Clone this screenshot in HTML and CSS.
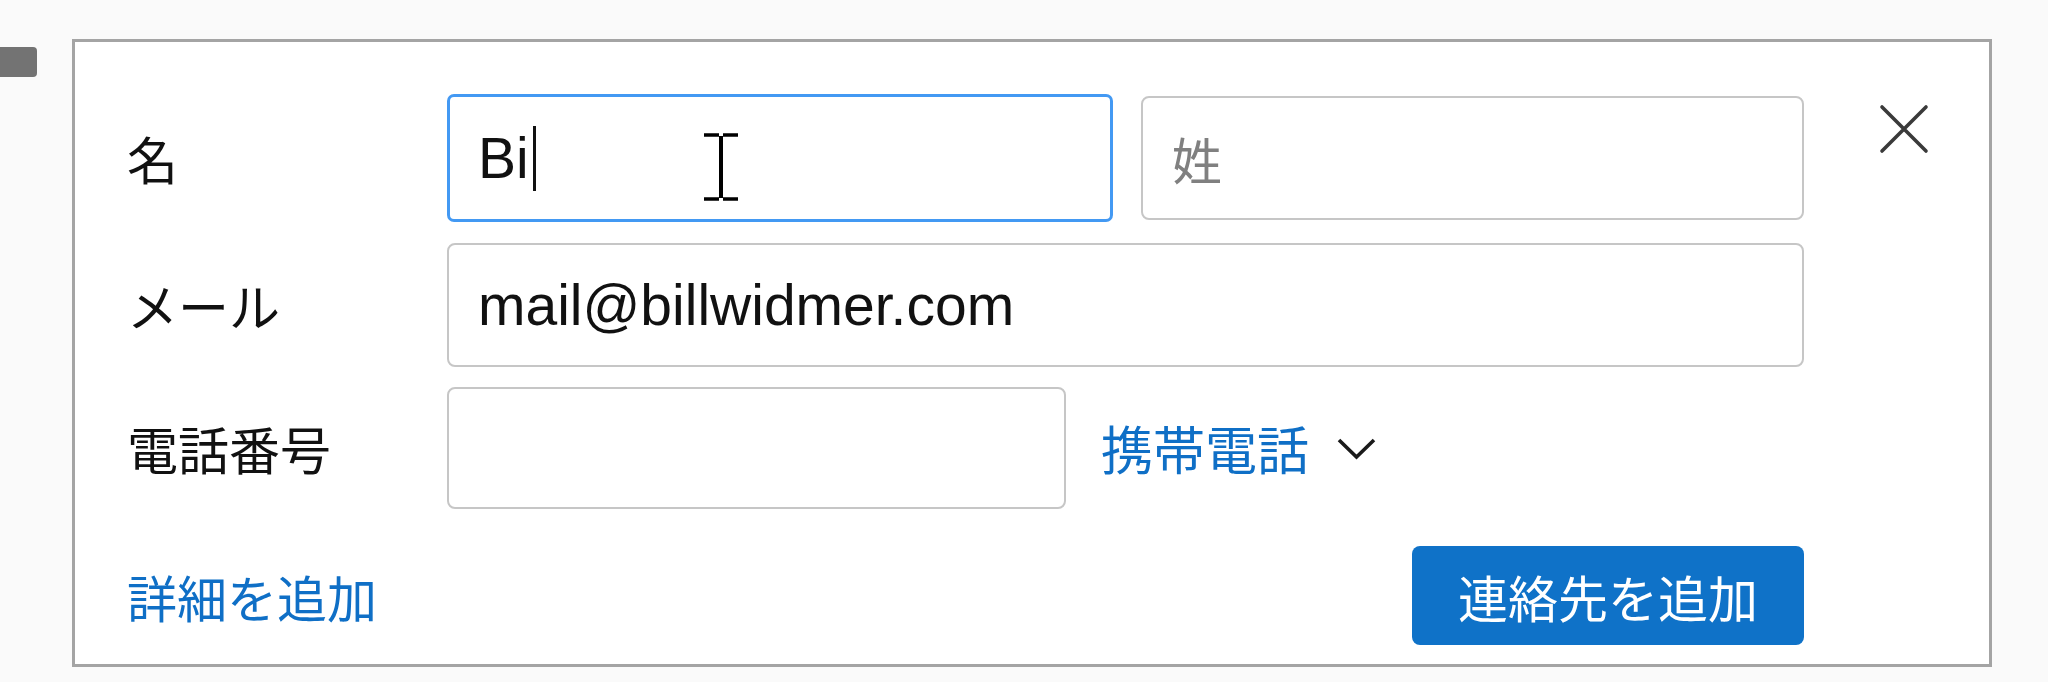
FILE: index.html
```html
<!DOCTYPE html>
<html lang="ja">
<head>
  <meta charset="UTF-8">
  <meta name="viewport" content="width=device-width, initial-scale=1">
  <title>連絡先を追加</title>
  <link rel="stylesheet" href="styles.css">
</head>
<body>

  <div class="page">
    <div class="edge"></div>

    <div class="card">
      <div class="form">

        <div class="row row-name">
          <div class="label">名</div>
          <div class="names">
            <div class="field focused">
              <span class="value">Bi</span><span class="caret"></span>
              <!-- pointeur de la souris au-dessus du champ -->
              <svg class="ibeam" width="36" height="70" viewBox="0 0 36 70">
                <path d="M1 3 H16 M20 3 H35 M1 67 H16 M20 67 H35" fill="none" stroke="#000" stroke-width="3.5"/>
                <path d="M18 4 V66" fill="none" stroke="#000" stroke-width="4"/>
              </svg>
            </div>
            <div class="field last">
              <span class="placeholder">姓</span>
            </div>
          </div>
        </div>

        <div class="row row-mail">
          <div class="label">メール</div>
          <div class="field wide">
            <span class="value">mail@billwidmer.com</span>
          </div>
        </div>

        <div class="row row-phone">
          <div class="label">電話番号</div>
          <div class="field phone"></div>
          <a class="type-select" href="#">
            携帯電話
            <svg class="chevron" width="40" height="24" viewBox="0 0 40 24">
              <path d="M2 3 L19.5 20 L37 3" fill="none" stroke="#1a1a1a" stroke-width="3.6"/>
            </svg>
          </a>
        </div>

        <div class="row row-actions">
          <a class="more" href="#">詳細を追加</a>
          <button class="add">連絡先を追加</button>
        </div>

      </div>

      <button class="close" aria-label="閉じる">
        <svg width="54" height="50" viewBox="0 0 54 50">
          <path d="M5 3 L49 47 M49 3 L5 47" fill="none" stroke="#3a3a3a" stroke-width="3.6" stroke-linecap="round"/>
        </svg>
      </button>
    </div>
  </div>

</body>
</html>
```

FILE: styles.css
```css
body {
  margin: 0;
  font-family: "Liberation Sans", "Noto Sans CJK JP", sans-serif;
  background-color: #fafafa;
  color: #111;
}

.page {
  display: flex;
  align-items: flex-start;
  height: 682px;
  overflow: hidden;
}

.edge {
  width: 37px;
  height: 30px;
  margin-top: 47px;
  background-color: #737373;
  border-radius: 0 4px 4px 0;
}

.card {
  display: flex;
  align-items: flex-start;
  box-sizing: border-box;
  width: 1920px;
  height: 628px;
  margin: 39px 0 0 35px;
  padding: 52px 0 19px 52px;
  background-color: #fff;
  border: 3px solid #a4a4a4;
}

.form {
  display: flex;
  flex-direction: column;
  width: 1677px;
}

.row {
  display: flex;
  align-items: center;
}

.row-name { height: 128px; }
.row-mail { height: 124px; margin-top: 21px; }
.row-phone { height: 122px; margin-top: 20px; }
.row-actions {
  height: 99px;
  margin-top: 37px;
  justify-content: space-between;
}

.label {
  width: 320px;
  flex-shrink: 0;
  font-family: "Noto Sans CJK JP", sans-serif;
  font-size: 51px;
  line-height: 1;
}

.names {
  display: flex;
  align-items: center;
  gap: 28px;
}

.field {
  position: relative;
  display: flex;
  align-items: center;
  box-sizing: border-box;
  height: 124px;
  padding-left: 29px;
  border: 2px solid #c6c6c6;
  border-radius: 8px;
  background-color: #fff;
  font-size: 57px;
}

.field.focused {
  width: 666px;
  height: 128px;
  padding-left: 28px;
  border: 3px solid #4399f3;
  border-radius: 7px;
}

.field.last { width: 663px; }
.field.wide { width: 1357px; }
.field.phone { width: 619px; height: 122px; }

.value {
  line-height: 1;
  color: #111;
}

.placeholder {
  font-family: "Noto Sans CJK JP", sans-serif;
  font-size: 50px;
  line-height: 1;
  color: #808080;
}

.caret {
  display: inline-block;
  width: 3px;
  height: 65px;
  margin-left: 4px;
  background-color: #111;
}

.ibeam {
  position: absolute;
  left: 253px;
  top: 35px;
}

.type-select {
  display: flex;
  align-items: center;
  margin-left: 35px;
  font-family: "Noto Sans CJK JP", sans-serif;
  font-size: 52px;
  line-height: 1;
  color: #0f6fc6;
  text-decoration: none;
}

.chevron {
  margin-left: 28px;
  margin-top: 2px;
}

.more {
  font-family: "Noto Sans CJK JP", sans-serif;
  font-size: 50px;
  line-height: 1;
  color: #0f6fc6;
  text-decoration: none;
}

.add {
  width: 392px;
  height: 99px;
  border: none;
  border-radius: 8px;
  background-color: #0f72c8;
  color: #fff;
  font-family: "Noto Sans CJK JP", sans-serif;
  font-size: 50px;
  line-height: 1;
  cursor: pointer;
}

.close {
  display: block;
  margin: 10px 0 0 73px;
  padding: 0;
  border: none;
  background: none;
  cursor: pointer;
}
```
